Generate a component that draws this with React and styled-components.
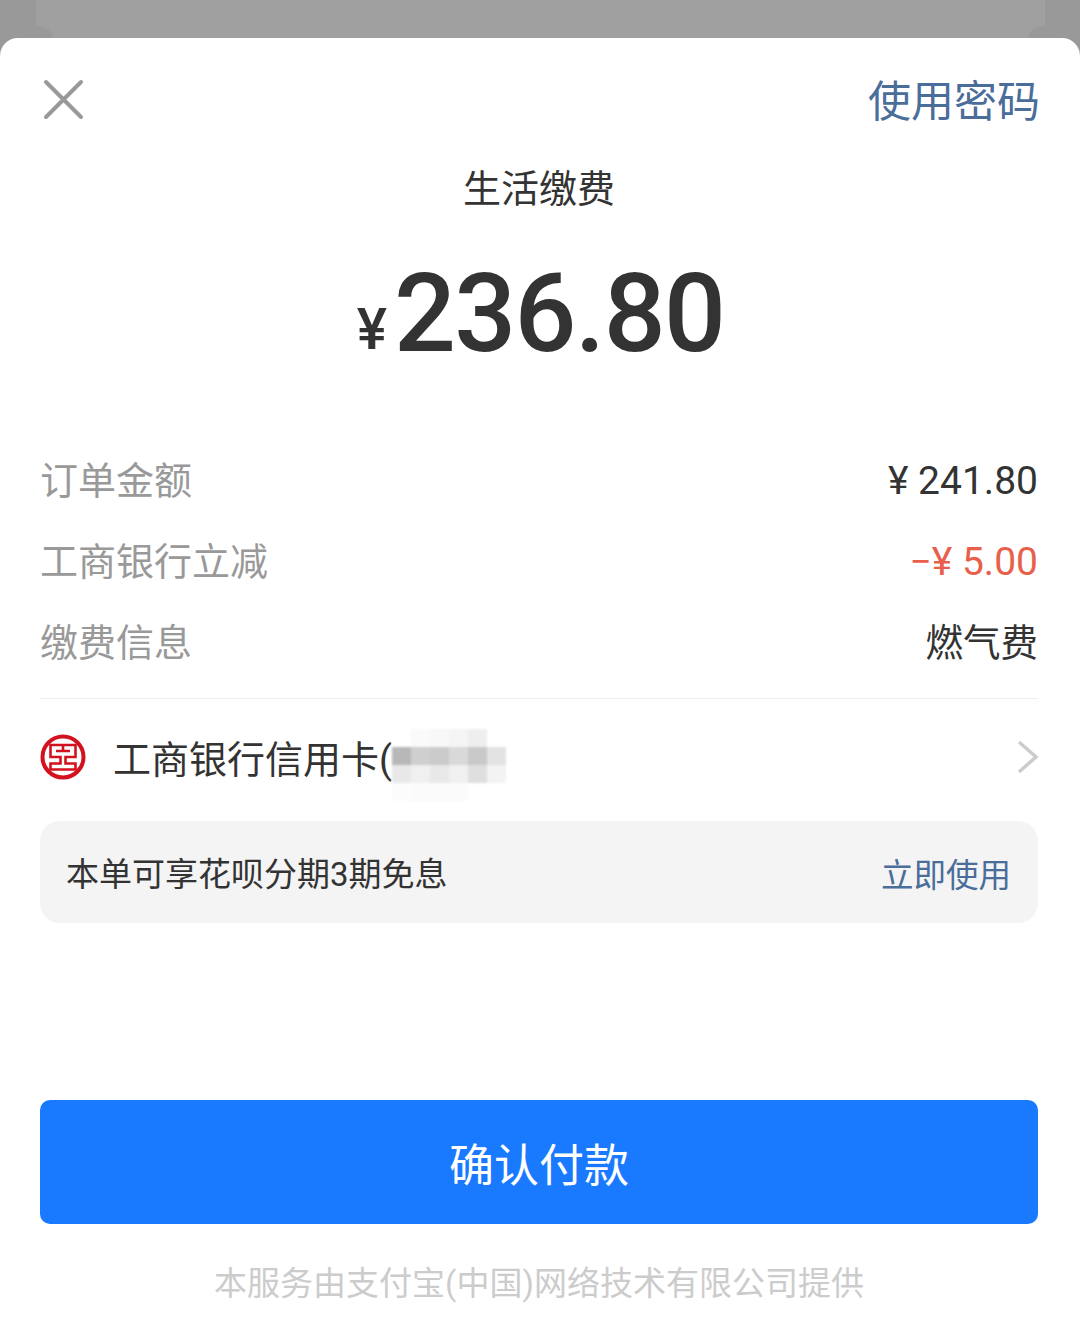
import React from 'react';
import styled, {createGlobalStyle} from 'styled-components';

const FONT = '"Roboto", "Noto Sans CJK SC", sans-serif';

const GlobalStyle = createGlobalStyle`
  html, body {
    margin: 0;
    padding: 0;
    background: #999999;
    font-family: ${FONT};
  }
`;

const Page = styled.div`
  width: 1080px;
  height: 1329px;
  overflow: hidden;
  display: flex;
  flex-direction: column;
  background: #999999;
`;

const Backdrop = styled.div`
  height: 38px;
  flex-shrink: 0;
  padding: 0 35px 0 36px;
  box-sizing: border-box;
`;

/* the dimmed page behind the sheet, its lower corners curve away */
const BackdropCard = styled.div`
  position: relative;
  height: 100%;
  background: #a0a0a0;
  &::before, &::after {
    content: '';
    position: absolute;
    bottom: 0;
    width: 17px;
    height: 12px;
    background: #999999;
  }
  &::before {
    left: 0;
    border-top-right-radius: 17px 12px;
  }
  &::after {
    right: 0;
    border-top-left-radius: 17px 12px;
  }
`;

const Sheet = styled.div`
  flex: 1;
  display: flex;
  flex-direction: column;
  background: #ffffff;
  border-radius: 18px 18px 0 0;
  padding: 0 42px 0 40px;
`;

const Header = styled.div`
  display: flex;
  align-items: center;
  justify-content: space-between;
  height: 124px;
`;

const CloseIcon = styled.svg`
  display: block;
  width: 48px;
  height: 48px;
`;

const PasswordLink = styled.span`
  font-size: 43px;
  line-height: 60px;
  padding-top: 4px;
  margin-right: -2px;
  color: #4a6d9a;
`;

const Title = styled.div`
  margin-top: 2px;
  text-align: center;
  font-size: 38px;
  line-height: 50px;
  color: #333333;
`;

const Amount = styled.div`
  height: 130px;
  margin-top: 35px;
  padding-left: 3px;
  text-align: center;
  line-height: 130px;
  color: #333333;
  font-weight: 500;
`;

const AmountSign = styled.span`
  font-size: 57px;
  margin-right: 7px;
  vertical-align: 2px;
`;

const AmountValue = styled.span`
  font-size: 109px;
  letter-spacing: -1.6px;
`;

const DetailList = styled.div`
  display: flex;
  flex-direction: column;
  margin-top: 58px;
  padding-bottom: 18px;
  border-bottom: 1px solid #eeeeee;
`;

const DetailRow = styled.div`
  display: flex;
  align-items: center;
  justify-content: space-between;
  height: 81px;
`;

const DetailLabel = styled.span`
  font-size: 38px;
  color: #999999;
`;

const DetailValue = styled.span`
  font-size: ${(props) => (props.$numeric ? '39px' : '37.5px')};
  padding-top: ${(props) => (props.$numeric ? '6px' : '0')};
  color: ${(props) => props.$color || '#333333'};
`;

const PayMethod = styled.div`
  display: flex;
  align-items: center;
  height: 117px;
  box-sizing: border-box;
  padding-bottom: 2px;
`;

const BankLogo = styled.svg`
  display: block;
  width: 46px;
  height: 46px;
  flex-shrink: 0;
`;

const CardName = styled.div`
  position: relative;
  flex: 1;
  margin-left: 27px;
  font-size: 38px;
  color: #333333;
`;

/* pixelated cover over the card number */
const Mosaic = styled.div`
  position: absolute;
  left: 279px;
  top: 0;
  display: grid;
  grid-template-columns: repeat(6, 19px);
  grid-auto-rows: 18px;
  filter: blur(1px);
`;

const MosaicCell = styled.div`
  background: ${(props) => props.$shade};
`;

const Chevron = styled.svg`
  display: block;
  width: 24px;
  height: 36px;
  margin-right: -2px;
  flex-shrink: 0;
`;

const PromoBar = styled.div`
  display: flex;
  align-items: center;
  justify-content: space-between;
  height: 102px;
  margin-top: 5px;
  padding: 0 27px 0 26px;
  background: #f4f4f4;
  border-radius: 20px;
  font-size: 33px;
`;

const PromoText = styled.span`
  color: #333333;
`;

const PromoLink = styled.span`
  color: #4a6d9a;
  font-size: 32.5px;
`;

const PayButton = styled.button`
  display: block;
  width: 100%;
  height: 124px;
  margin-top: auto;
  border: 0;
  border-radius: 10px;
  background: #1a7aff;
  color: #ffffff;
  font-family: ${FONT};
  font-size: 45px;
`;

const Footer = styled.div`
  height: 105px;
  padding-top: 37px;
  box-sizing: border-box;
  text-align: center;
  font-size: 33px;
  line-height: 46px;
  color: #cccccc;
  white-space: nowrap;
`;

const details = [
  {label: '订单金额', value: '¥ 241.80', numeric: true},
  {label: '工商银行立减', value: '−¥ 5.00', color: '#e8604c', numeric: true},
  {label: '缴费信息', value: '燃气费'},
];

const mosaicShades = [
  '#ffffff', '#fafafa', '#f8f8f8', '#f5f5f5', '#eeeeee', '#ffffff',
  '#b8b8b8', '#cfcfcf', '#cbcbcb', '#d9d9d9', '#c9c9c9', '#e3e3e3',
  '#e8e8e8', '#f0f0f0', '#e8e8e8', '#f0f0f0', '#dfdfdf', '#f3f3f3',
  '#fcfcfc', '#fbfbfb', '#fbfbfb', '#fbfbfb', '#ffffff', '#ffffff',
];

const App = () => {
  return (
    <Page>
      <GlobalStyle />
      <Backdrop>
        <BackdropCard />
      </Backdrop>
      <Sheet>
        <Header>
          <CloseIcon viewBox="0 0 48 48">
            <path d="M6 6 L41 41 M41 6 L6 41" stroke="#999999" strokeWidth="4" strokeLinecap="round" fill="none" />
          </CloseIcon>
          <PasswordLink>使用密码</PasswordLink>
        </Header>
        <Title>生活缴费</Title>
        <Amount>
          <AmountSign>¥</AmountSign>
          <AmountValue>236.80</AmountValue>
        </Amount>
        <DetailList>
          {details.map((item) => (
            <DetailRow key={item.label}>
              <DetailLabel>{item.label}</DetailLabel>
              <DetailValue $color={item.color} $numeric={item.numeric}>{item.value}</DetailValue>
            </DetailRow>
          ))}
        </DetailList>
        <PayMethod>
          <BankLogo viewBox="0 0 46 46">
            <circle cx="23" cy="23" r="20.5" fill="none" stroke="#d3121f" strokeWidth="4" />
            <path
              d="M23 11 H10.5 V23 H20.5 V29.5 H10.5 V35.5 H35.5 V29.5 H25.5 V23 H35.5 V11 H23 V17 M16 17 H30"
              fill="none"
              stroke="#d3121f"
              strokeWidth="2.6"
            />
          </BankLogo>
          <CardName>
            工商银行信用卡(
            <Mosaic>
              {mosaicShades.map((shade, i) => (
                <MosaicCell key={i} $shade={shade} />
              ))}
            </Mosaic>
          </CardName>
          <Chevron viewBox="0 0 24 36">
            <path d="M3 3 L20 18 L3 33" fill="none" stroke="#cccccc" strokeWidth="3.5" />
          </Chevron>
        </PayMethod>
        <PromoBar>
          <PromoText>本单可享花呗分期3期免息</PromoText>
          <PromoLink>立即使用</PromoLink>
        </PromoBar>
        <PayButton>确认付款</PayButton>
        <Footer>本服务由支付宝(中国)网络技术有限公司提供</Footer>
      </Sheet>
    </Page>
  );
};

export default App;
